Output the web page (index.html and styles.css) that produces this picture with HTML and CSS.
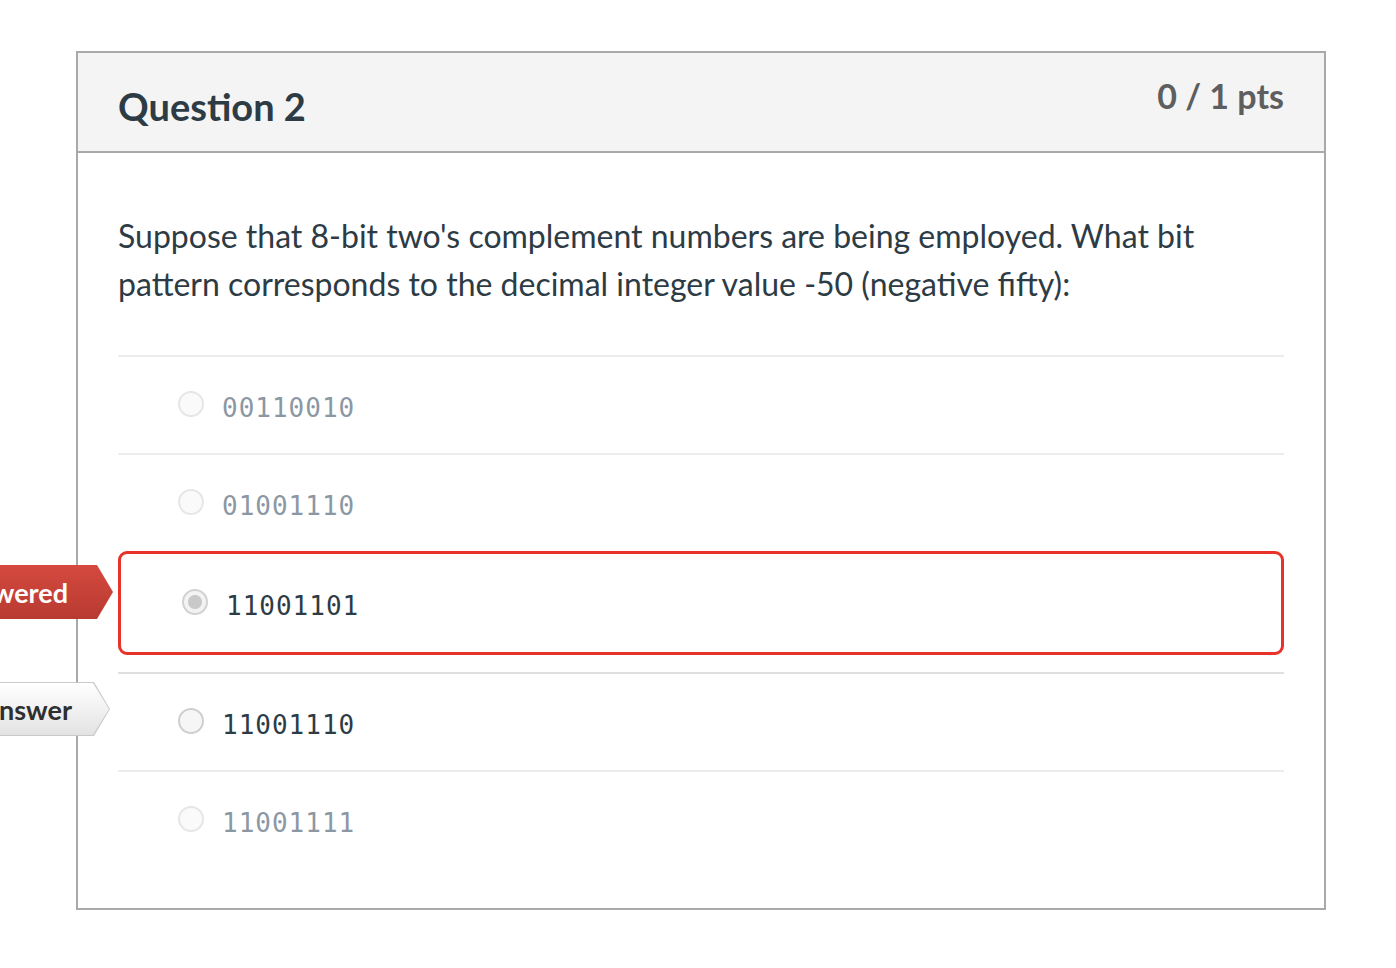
FILE: index.html
```html
<!DOCTYPE html>
<html lang="en">
<head>
<meta charset="utf-8">
<title>Question 2</title>
<link rel="stylesheet" href="styles.css">
</head>
<body>
<div class="page">
  <div class="card">
    <div class="card-header">
      <h2 class="title">Question 2</h2>
      <div class="pts">0 / 1 pts</div>
    </div>
    <div class="card-body">
      <p class="question">Suppose that 8-bit two's complement numbers are being employed. What bit pattern corresponds to the decimal integer value -50 (negative fifty):</p>
      <div class="answers">
        <div class="answer muted">
          <span class="radio"></span>
          <span class="value">00110010</span>
        </div>
        <div class="answer muted">
          <span class="radio"></span>
          <span class="value">01001110</span>
        </div>
        <div class="answer chosen">
          <div class="badge wrong"><span>You Answered</span></div>
          <span class="radio checked"></span>
          <span class="value">11001101</span>
        </div>
        <div class="answer correct">
          <div class="badge right"><span>Correct Answer</span></div>
          <span class="radio"></span>
          <span class="value">11001110</span>
        </div>
        <div class="answer muted">
          <span class="radio"></span>
          <span class="value">11001111</span>
        </div>
      </div>
    </div>
  </div>
</div>
</body>
</html>
```
FILE: styles.css
```css
html, body {
  margin: 0;
  padding: 0;
  background: #ffffff;
}

body {
  font-family: Lato, "Noto Sans", sans-serif;
  color: #2d3b45;
  overflow: hidden;
}

.page {
  padding: 51px 0 0 76px;
}

.card {
  width: 1246px;
  border: 2px solid #a9a9a9;
  background: #fff;
}

.card-header {
  height: 98px;
  background: #f4f4f4;
  border-bottom: 2px solid #a9a9a9;
  display: flex;
  justify-content: space-between;
  align-items: flex-start;
  padding: 0 40px;
}

.title {
  margin: 0;
  padding-top: 30px;
  font-size: 38px;
  line-height: 46px;
  font-weight: 700;
  color: #2d3b45;
}

.pts {
  padding-top: 23px;
  font-size: 34px;
  line-height: 40px;
  font-weight: 700;
  color: #5e5e5e;
}

.card-body {
  padding: 59px 40px 40px 40px;
}

.question {
  margin: 0 0 47px 0;
  font-size: 32px;
  line-height: 48px;
  font-weight: 400;
  color: #2d3b45;
}

.answers {
  display: flex;
  flex-direction: column;
}

.answer {
  position: relative;
  display: flex;
  align-items: center;
  gap: 18px;
  height: 96px;
  padding-left: 60px;
  border-top: 2px solid #ececec;
}

.answer.chosen {
  height: 98px;
  border: 3px solid #e8332a;
  border-radius: 9px;
  padding-left: 61px;
  margin-bottom: 17px;
}

.answer.chosen + .answer {
  border-top-color: #e0e0e0;
}

.radio {
  width: 22px;
  height: 22px;
  border-radius: 50%;
  border: 2px solid #e6e6e6;
  background: #fafafa;
  flex: none;
  margin-top: -2px;
  box-sizing: content-box;
}

.correct .radio {
  border-color: #cfcfcf;
  background: #f6f6f6;
}

.radio.checked {
  border-color: #d2d2d2;
  background: radial-gradient(circle, #c9c9c9 0 6.5px, #f3f3f3 7.5px);
}

.value {
  font-family: "DejaVu Sans Mono", "Liberation Mono", monospace;
  font-size: 26px;
  letter-spacing: 1px;
  padding-top: 6px;
  color: #2d3b45;
}

.muted .value {
  color: #8c97a4;
}

.badge {
  position: absolute;
  right: calc(100% + 8px);
  height: 54px;
  width: 260px;
  clip-path: polygon(0 0, calc(100% - 16px) 0, 100% 50%, calc(100% - 16px) 100%, 0 100%);
  display: flex;
  align-items: center;
  justify-content: flex-end;
  box-sizing: border-box;
  font-family: Lato, "Noto Sans", sans-serif;
  font-size: 27px;
  font-weight: 700;
  white-space: nowrap;
}

.badge.wrong {
  top: 11px;
  padding-right: 45px;
  background: linear-gradient(#d5493f, #b83a31);
  color: #ffffff;
}

.badge.right {
  top: 8px;
  padding-right: 38px;
  background: #c9c9c9;
  color: #2f2f2f;
}

.badge.right::before {
  content: "";
  position: absolute;
  inset: 1px 1px 1px 0;
  clip-path: polygon(0 0, calc(100% - 16px) 0, 100% 50%, calc(100% - 16px) 100%, 0 100%);
  background: linear-gradient(#ffffff, #e3e3e3);
}

.badge span {
  position: relative;
}
```
